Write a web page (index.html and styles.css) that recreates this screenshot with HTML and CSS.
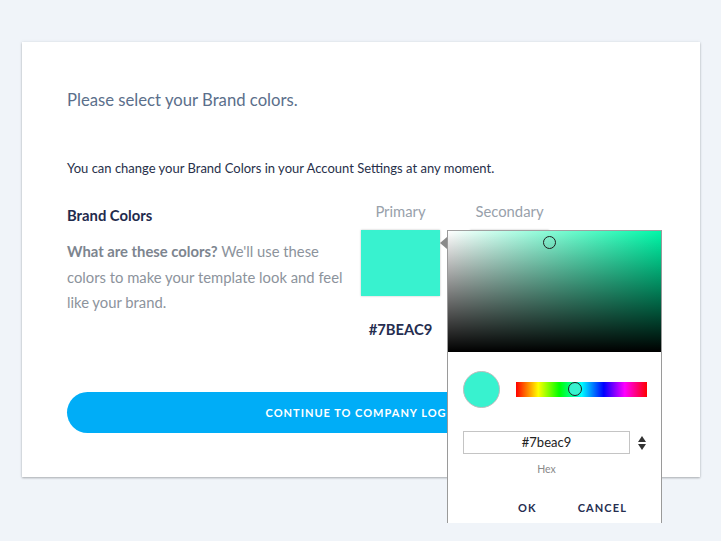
FILE: index.html
```html
<!DOCTYPE html>
<html>
<head>
<meta charset="utf-8">
<link rel="stylesheet" href="styles.css">
</head>
<body>
<div class="card">
  <h1 class="title">Please select your Brand colors.</h1>
  <p class="note">You can change your Brand Colors in your Account Settings at any moment.</p>
  <div class="brand">
    <div class="brand-info">
      <div class="brand-head">Brand Colors</div>
      <p class="brand-desc"><b>What are these colors?</b> We'll use these colors to make your template look and feel like your brand.</p>
    </div>
    <div class="swatches">
      <div class="swatch-col">
        <div class="swatch-label">Primary</div>
        <div class="swatch primary"></div>
        <div class="swatch-hex">#7BEAC9</div>
      </div>
      <div class="swatch-col">
        <div class="swatch-label">Secondary</div>
        <div class="swatch secondary"></div>
        <div class="swatch-hex"></div>
      </div>
    </div>
  </div>
  <button class="continue">CONTINUE TO COMPANY LOGO</button>

  <div class="picker">
    <div class="picker-arrow"></div>
    <div class="sv">
      <div class="sv-cursor"></div>
    </div>
    <div class="picker-body">
      <div class="picker-row">
        <div class="preview"></div>
        <div class="hue">
          <div class="hue-cursor"></div>
        </div>
      </div>
      <div class="input-row">
        <div class="hex-input">#7beac9</div>
        <div class="spinner">
          <span class="tri-up"></span>
          <span class="tri-down"></span>
        </div>
      </div>
      <div class="hex-label">Hex</div>
      <div class="picker-actions">
        <span class="action ok">OK</span>
        <span class="action">CANCEL</span>
      </div>
    </div>
  </div>
</div>
</body>
</html>
```

FILE: styles.css
```css
html, body {
  margin: 0;
  padding: 0;
  background: #f0f4f9;
  font-family: Lato, "Open Sans", sans-serif;
}

body {
  height: 541px;
}

.card {
  position: relative;
  margin: 42px 0 0 22px;
  width: 633px;
  height: 387px;
  padding: 48px 0 0 45px;
  background: #fff;
  box-shadow: 0 1px 2px rgba(0, 0, 0, 0.28), 0 0 3px rgba(120, 130, 150, 0.12);
}

.title {
  margin: 0;
  font-size: 16.7px;
  line-height: 20px;
  font-weight: 400;
  color: #5b6f8b;
}

.note {
  margin: 49px 0 0 0;
  font-size: 13px;
  line-height: 18px;
  color: #27304a;
}

.brand {
  display: flex;
}

.brand-info {
  width: 285px;
  padding-top: 29px;
}

.brand-head {
  font-size: 14.8px;
  line-height: 18px;
  font-weight: 700;
  color: #1f2b4d;
}

.brand-desc {
  margin: 15px 0 0 0;
  font-size: 14.8px;
  line-height: 25.5px;
  color: #8c939c;
}

.brand-desc b {
  font-weight: 700;
  color: #7d858f;
}

.swatches {
  display: flex;
  gap: 30px;
  padding-top: 25px;
  margin-left: 9px;
}

.swatch-col {
  width: 79px;
  display: flex;
  flex-direction: column;
  align-items: center;
}

.swatch-label {
  font-size: 14.8px;
  line-height: 18px;
  color: #98a1ab;
}

.swatch {
  margin-top: 10px;
  width: 79px;
  height: 66px;
  box-shadow: 0 0 2px rgba(0, 0, 0, 0.25);
}

.primary {
  background: #38f2cf;
}

.secondary {
  background: #ffffff;
}

.swatch-hex {
  margin-top: 24px;
  height: 18px;
  font-size: 14.8px;
  line-height: 18px;
  font-weight: 700;
  color: #262e50;
}

.continue {
  display: block;
  margin-top: 54px;
  width: 588px;
  height: 41px;
  border: none;
  border-radius: 21px;
  background: #00adf7;
  color: #fff;
  font-family: Lato, sans-serif;
  font-size: 11px;
  font-weight: 700;
  letter-spacing: 1px;
  padding: 0;
}

.picker {
  position: absolute;
  left: 425px;
  top: 188px;
  width: 213px;
  height: 292px;
  background: #fff;
  border-left: 1px solid #9a9a9a;
  border-right: 1px solid #9a9a9a;
  border-top: 1px solid #a0a0a0;
}

.picker-arrow {
  position: absolute;
  left: -8px;
  top: 6px;
  width: 0;
  height: 0;
  border-top: 6px solid transparent;
  border-bottom: 6px solid transparent;
  border-right: 7px solid #8a8a8a;
}

.sv {
  position: relative;
  height: 121px;
  background: linear-gradient(to top, #000, rgba(0, 0, 0, 0)),
              linear-gradient(to right, #fff, #00f7a8);
}

.sv-cursor {
  position: absolute;
  left: 95px;
  top: 5px;
  width: 11px;
  height: 11px;
  border: 1.5px solid #1d1d1d;
  border-radius: 50%;
}

.picker-body {
  padding: 19px 14px 0 15px;
}

.picker-row {
  display: flex;
  align-items: center;
  gap: 16px;
}

.preview {
  width: 35px;
  height: 35px;
  border-radius: 50%;
  background: #38f2cf;
  border: 1px solid #bdbdbd;
}

.hue {
  position: relative;
  width: 131px;
  height: 15px;
  background: linear-gradient(to right, #f00 0%, #ff0 17%, #0f0 33%, #0ff 50%, #00f 67%, #f0f 83%, #f00 100%);
}

.hue-cursor {
  position: absolute;
  left: 52px;
  top: 0px;
  width: 12px;
  height: 12px;
  border: 1.5px solid #1d1d1d;
  border-radius: 50%;
  background: #38f2cf;
}

.input-row {
  display: flex;
  align-items: center;
  margin-top: 23px;
}

.hex-input {
  width: 165px;
  height: 21px;
  border: 1px solid #c4c4c4;
  font-size: 13px;
  line-height: 21px;
  text-align: center;
  color: #222;
}

.spinner {
  margin-left: 8px;
  display: flex;
  flex-direction: column;
  gap: 2px;
}

.tri-up {
  width: 0;
  height: 0;
  border-left: 4px solid transparent;
  border-right: 4px solid transparent;
  border-bottom: 6px solid #333;
}

.tri-down {
  width: 0;
  height: 0;
  border-left: 4px solid transparent;
  border-right: 4px solid transparent;
  border-top: 6px solid #333;
}

.hex-label {
  margin-top: 8px;
  width: 167px;
  text-align: center;
  font-size: 10.5px;
  line-height: 14px;
  color: #8a8a8a;
}

.picker-actions {
  display: flex;
  gap: 41px;
  margin-top: 25px;
  padding-left: 55px;
}

.action {
  font-size: 11px;
  line-height: 14px;
  font-weight: 700;
  letter-spacing: 1.1px;
  color: #262e50;
}
```
